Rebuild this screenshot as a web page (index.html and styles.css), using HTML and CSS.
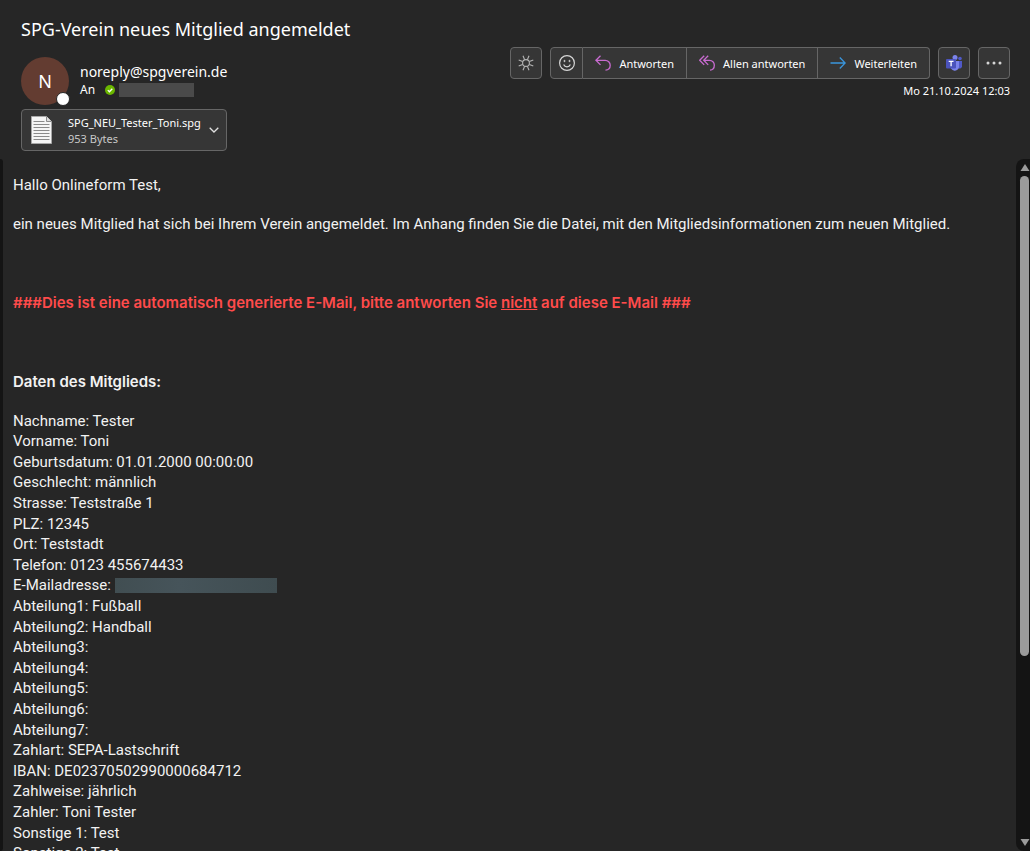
FILE: index.html
```html
<!DOCTYPE html>
<html lang="de">
<head>
  <meta charset="UTF-8" />
  <meta name="viewport" content="width=device-width, initial-scale=1.0"/>
  <title>SPG-Verein neues Mitglied angemeldet</title>
  <link rel="stylesheet" href="styles.css">
</head>
<body>
  <header class="mail-header">
    <h1 class="subject">SPG-Verein neues Mitglied angemeldet</h1>

    <div class="meta">
      <div class="avatar">N<span class="presence"></span></div>
      <div class="sender">
        <div class="from">noreply@spgverein.de</div>
        <div class="to">
          <span>An</span>
          <svg class="check" viewBox="0 0 10 10"><circle cx="5" cy="5" r="5" fill="#6bb700"/><path d="M2.8 5.1l1.6 1.6 2.9-3" fill="none" stroke="#fff" stroke-width="1.3"/></svg>
          <span class="redacted"></span>
        </div>
      </div>
      <div class="side">
        <div class="actions">
          <button class="btn" aria-label="Hintergrund wechseln">
            <svg viewBox="0 0 16 16" fill="none" stroke="#b5b5b5" stroke-width="1.1"><circle cx="8" cy="8" r="3.4"/><path d="M11.4 9.4l3.9 1.6M9.4 11.4l1.6 3.9M6.6 11.4L5 15.3M4.6 9.4L.7 11M4.6 6.6L.7 5M6.6 4.6L5 .7M9.4 4.6L11 .7M11.4 6.6L15.3 5"/></svg>
          </button>
          <div class="btn-group">
            <button class="btn" aria-label="Reaktion">
              <svg viewBox="0 0 16 16" fill="none" stroke="#d6d6d6" stroke-width="1.2"><circle cx="8" cy="8" r="7.4"/><path d="M4.6 9.6c.7 1.5 1.9 2.2 3.4 2.2s2.7-.7 3.4-2.2"/><circle cx="5.5" cy="6" r=".7" fill="#d6d6d6" stroke-width=".6"/><circle cx="10.5" cy="6" r=".7" fill="#d6d6d6" stroke-width=".6"/></svg>
            </button>
            <button class="btn">
              <svg viewBox="0 0 16 16" fill="none" stroke="#c86bd0" stroke-width="1.3"><path d="M5.5.7L.9 5.3l4.6 4.6M1 5.3h9.2a5 5 0 0 1 5 5c0 2.8-1.9 4.8-4.7 4.8"/></svg>
              Antworten
            </button>
            <button class="btn">
              <svg viewBox="0 0 16 16" fill="none" stroke="#c86bd0" stroke-width="1.3"><path d="M5.2.7L.7 5.3l4.5 4.6M9.2.7L4.7 5.3l4.5 4.6M4.8 5.3h5.7a4.8 4.8 0 0 1 4.8 5c0 2.8-1.6 4.8-4.3 4.8"/></svg>
              Allen antworten
            </button>
            <button class="btn">
              <svg viewBox="0 0 16 16" fill="none" stroke="#3a96dd" stroke-width="1.3"><path d="M.5 8H15M9.8 2.5L15.2 8l-5.4 5.5"/></svg>
              Weiterleiten
            </button>
          </div>
          <button class="btn" aria-label="In Teams teilen">
            <svg viewBox="0 0 16 16"><circle cx="14" cy="3.5" r="1.8" fill="#5059c9"/><circle cx="9" cy="2.6" r="2.5" fill="#7b83eb"/><path d="M11.5 6H16v5.2a2.6 2.6 0 0 1-4.5 1.5z" fill="#5059c9"/><path d="M5 6h8v5.5a4.3 4.3 0 0 1-8 2z" fill="#7b83eb"/><rect y="4" width="10" height="9.5" rx="1" fill="#4b53bc"/><path d="M2.7 6.3h4.8M5.1 6.3v5" stroke="#fff" stroke-width="1.3"/></svg>
          </button>
          <button class="btn" aria-label="Weitere Aktionen">
            <svg viewBox="0 0 16 16" fill="#d6d6d6"><circle cx="2" cy="8" r="1.5"/><circle cx="8" cy="8" r="1.5"/><circle cx="14" cy="8" r="1.5"/></svg>
          </button>
        </div>
        <time class="date" datetime="2024-10-21T12:03">Mo 21.10.2024 12:03</time>
      </div>
    </div>

    <button class="attachment">
      <svg class="file-icon" viewBox="0 0 21 28"><path d="M.5.5h15l5 5v22H.5z" fill="#f5f5f5" stroke="#a8a8a8"/><path d="M15.5.5v5h5" fill="#ddd" stroke="#8a8a8a"/><path d="M2.5 5.5h11M2.5 8.5h16M2.5 11.5h16M2.5 14.5h16M2.5 17.5h16M2.5 20.5h16M2.5 23.5h16" stroke="#8a8a8a"/></svg>
      <span class="file">
        <span class="file-name">SPG_NEU_Tester_Toni.spg</span>
        <span class="file-size">953 Bytes</span>
      </span>
      <svg class="chevron" viewBox="0 0 10 6"><path d="M.7.7L5 5 9.3.7" fill="none" stroke="#e0e0e0" stroke-width="1.3"/></svg>
    </button>
  </header>

  <main class="reader">
    <div class="edge"></div>
    <article class="message">
      <p>Hallo Onlineform Test,</p>
      <p>ein neues Mitglied hat sich bei Ihrem Verein angemeldet. Im Anhang finden Sie die Datei, mit den Mitgliedsinformationen zum neuen Mitglied.</p>
      <p class="notice">###Dies ist eine automatisch generierte E-Mail, bitte antworten Sie <u>nicht</u> auf diese E-Mail ###</p>
      <h2>Daten des Mitglieds:</h2>
      <ul class="data">
        <li>Nachname: Tester</li>
        <li>Vorname: Toni</li>
        <li>Geburtsdatum: 01.01.2000 00:00:00</li>
        <li>Geschlecht: männlich</li>
        <li>Strasse: Teststraße 1</li>
        <li>PLZ: 12345</li>
        <li>Ort: Teststadt</li>
        <li>Telefon: 0123 455674433</li>
        <li class="mail-row">E-Mailadresse: <span class="redacted-mail"></span></li>
        <li>Abteilung1: Fußball</li>
        <li>Abteilung2: Handball</li>
        <li>Abteilung3:</li>
        <li>Abteilung4:</li>
        <li>Abteilung5:</li>
        <li>Abteilung6:</li>
        <li>Abteilung7:</li>
        <li>Zahlart: SEPA-Lastschrift</li>
        <li>IBAN: DE02370502990000684712</li>
        <li>Zahlweise: jährlich</li>
        <li>Zahler: Toni Tester</li>
        <li>Sonstige 1: Test</li>
        <li>Sonstige 2: Test</li>
      </ul>
    </article>
    <div class="scrollbar">
      <svg viewBox="0 0 10 7"><path d="M5 0l4.5 7H.5z"/></svg>
      <div class="track"><div class="thumb"></div></div>
      <svg viewBox="0 0 10 7"><path d="M5 7L.5 0h9z"/></svg>
    </div>
  </main>
</body>
</html>
```
FILE: styles.css
```css
:root {
  --bg: #262626;
  --control: #363636;
  --line: #666;
  --dark: #141414;
  --ui-font: "Noto Sans", "Open Sans", sans-serif;
}

* {
  box-sizing: border-box;
}

body {
  margin: 0;
  height: 100vh;
  display: flex;
  flex-direction: column;
  overflow: hidden;
  background: var(--bg);
  color: #fff;
  font-family: var(--ui-font);
}

button {
  font: inherit;
  color: inherit;
  cursor: pointer;
}

.mail-header {
  padding: 15px 20px 8px 21px;
}

.subject {
  margin: 0 0 4px;
  font-size: 18px;
  line-height: 28px;
  font-weight: 400;
}

.meta {
  display: flex;
  margin-bottom: 4px;
}

.avatar {
  position: relative;
  width: 48px;
  height: 48px;
  margin: 10px 11px 0 0;
  border-radius: 50%;
  background: #633c31;
  font-size: 18px;
  line-height: 48px;
  text-align: center;
}

.presence {
  position: absolute;
  right: -1px;
  bottom: -1px;
  width: 14px;
  height: 14px;
  border: 1px solid var(--bg);
  border-radius: 50%;
  background: #fff;
}

.sender {
  padding-top: 15px;
}

.from {
  font-size: 14px;
  line-height: 20px;
}

.to {
  display: flex;
  align-items: center;
  font-size: 12px;
  line-height: 16px;
}

.check {
  width: 10px;
  height: 10px;
  margin: 0 4px 0 10px;
}

.redacted {
  width: 75px;
  height: 14px;
  background: #4a4a4a;
}

.side {
  margin-left: auto;
  text-align: right;
}

.actions {
  display: flex;
  justify-content: flex-end;
  gap: 8px;
}

.btn {
  display: flex;
  align-items: center;
  justify-content: center;
  gap: 8px;
  height: 32px;
  padding: 0 12px;
  border: 1px solid var(--line);
  border-radius: 4px;
  background: var(--control);
  font-size: 11px;
  white-space: nowrap;
}

.btn:hover {
  background: #444;
}

.btn svg {
  width: 16px;
  height: 16px;
  flex: none;
}

.btn[aria-label] {
  width: 32px;
  padding: 0;
}

.btn-group {
  display: flex;
}

.btn-group .btn {
  border-radius: 0;
}

.btn-group .btn + .btn {
  border-left: 0;
}

.btn-group .btn:first-child {
  width: 33px;
  border-radius: 4px 0 0 4px;
}

.btn-group .btn:last-child {
  border-radius: 0 4px 4px 0;
}

.date {
  display: block;
  margin-top: 4px;
  font-size: 11px;
  line-height: 16px;
}

.attachment {
  display: flex;
  align-items: center;
  width: 206px;
  height: 42px;
  padding: 0 7px 0 9px;
  border: 1px solid var(--line);
  border-radius: 4px;
  background: var(--control);
  text-align: left;
}

.file-icon {
  width: 21px;
  height: 28px;
}

.file {
  flex: 1;
  margin-left: 16px;
  padding-top: 2px;
  font-size: 11px;
  line-height: 16px;
}

.file-name,
.file-size {
  display: block;
}

.file-size {
  color: #c8c8c8;
}

.chevron {
  width: 10px;
  height: 6px;
}

.reader {
  flex: 1;
  min-height: 0;
  display: flex;
}

.edge {
  width: 3px;
  background: var(--dark);
  border-radius: 0 3px 3px 0;
}

.message {
  flex: 1;
  overflow: hidden;
  padding: 16px 10px 0;
  font-family: Roboto, "Open Sans", sans-serif;
  font-size: 15px;
  line-height: 20px;
  color: #f2f2f2;
}

.message p,
.message h2 {
  margin: 0 0 19px;
  font-size: inherit;
}

.message h2,
.message .notice {
  font-family: Inter, "Open Sans", sans-serif;
  font-weight: 600;
}

.message .notice {
  margin: 59px 0;
  color: #ff4b4b;
}

.data {
  margin: 0;
  padding: 0;
  list-style: none;
}

.data li:nth-child(5n + 2),
.data li:nth-child(5n + 4),
.data li:nth-child(5n + 5) {
  margin-bottom: 1px;
}

.mail-row {
  display: flex;
  align-items: center;
  gap: 4px;
}

.redacted-mail {
  width: 162px;
  height: 15px;
  background: linear-gradient(90deg, #414e52, #46545a 40%, #3f4c50);
}

.scrollbar {
  width: 14px;
  display: flex;
  flex-direction: column;
  align-items: center;
  gap: 5px;
  padding: 5px 0 5px 3px;
  background: var(--dark);
  border-radius: 8px 0 0 8px;
}

.scrollbar svg {
  width: 10px;
  height: 7px;
  fill: #9b9b9b;
}

.track {
  flex: 1;
  width: 9px;
}

.thumb {
  height: 73%;
  border-radius: 5px;
  background: #9b9b9b;
}
```
